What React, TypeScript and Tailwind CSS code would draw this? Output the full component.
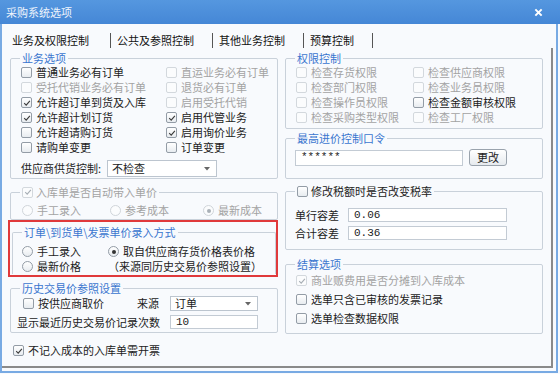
import { FC, ReactNode } from "react";

const cjk = "font-['Noto_Sans_CJK_SC','Noto_Sans',sans-serif]";

const Check: FC<{ checked?: boolean; disabled?: boolean }> = ({ checked, disabled }) => (
  <span
    className={`w-[11px] h-[11px] rounded-[2px] border flex items-center justify-center shrink-0 ${
      disabled ? "border-[#d3d8dd] bg-[#fbfcfd]" : "border-[#939ca6] bg-gradient-to-b from-[#ffffff] to-[#e8ecf0]"
    }`}
  >
    {checked && (
      <svg viewBox="0 0 10 10" className="w-[8px] h-[8px]">
        <path
          d="M1.5 5.2 L4 7.6 L8.6 2.4"
          fill="none"
          stroke={disabled ? "#a7aeb5" : "#3b3b3b"}
          strokeWidth="1.4"
        />
      </svg>
    )}
  </span>
);

const Radio: FC<{ checked?: boolean; disabled?: boolean }> = ({ checked, disabled }) => (
  <span
    className={`w-[11px] h-[11px] rounded-full border flex items-center justify-center shrink-0 ${
      disabled ? "border-[#d0d5da] bg-[#fbfcfd]" : "border-[#939ca6] bg-gradient-to-b from-[#ffffff] to-[#e8ecf0]"
    }`}
  >
    {checked && (
      <span className={`w-[4px] h-[4px] rounded-full ${disabled ? "bg-[#a9b0b7]" : "bg-[#333]"}`} />
    )}
  </span>
);

interface ItemProps {
  label: string;
  checked?: boolean;
  disabled?: boolean;
  radio?: boolean;
}

const Item: FC<ItemProps> = ({ label, checked, disabled, radio }) => (
  <div className="flex items-center gap-[4px] h-[15px]">
    {radio ? <Radio checked={checked} disabled={disabled} /> : <Check checked={checked} disabled={disabled} />}
    <span className={`leading-[15px] whitespace-nowrap ${disabled ? "text-[#a3a3a3]" : "text-[#222]"}`}>
      {label}
    </span>
  </div>
);

const Group: FC<{ legend: ReactNode; className?: string; children: ReactNode }> = ({
  legend,
  className,
  children,
}) => (
  <fieldset className={`border border-[#c9d1da] rounded-[2px] min-w-0 ${className ?? ""}`}>
    <legend className="ml-[9px] px-[2px] h-[14px] leading-[14px] text-[#3a76cf]">{legend}</legend>
    {children}
  </fieldset>
);

const Select: FC<{ value: string; className: string }> = ({ value, className }) => (
  <div className={`flex items-center justify-between bg-white border border-[#bcc5cf] pl-[4px] pr-[6px] ${className}`}>
    <span className="leading-none text-[#222]">{value}</span>
    <svg viewBox="0 0 6 4" className="w-[6px] h-[4px]">
      <path d="M0 0 H6 L3 3.5 Z" fill="#666" />
    </svg>
  </div>
);

const Input: FC<{ value: string; className: string }> = ({ value, className }) => (
  <div className={`flex items-center bg-white border border-[#c3cbd4] pl-[5px] ${className}`}>
    <span className="font-['Liberation_Mono',monospace] text-[11px] leading-none text-[#222]">{value}</span>
  </div>
);

const tabs = ["业务及权限控制", "公共及参照控制", "其他业务控制", "预算控制"];

export default function App() {
  return (
    <div className={`w-[560px] h-[374px] bg-[#f8fafd] flex flex-col text-[11px] ${cjk}`}>
      {/* title bar */}
      <div className="h-[24px] shrink-0 bg-gradient-to-b from-[#5597df] to-[#4587d6] flex items-center justify-between pl-[6px] pr-[17px]">
        <span className="text-[#eef4fc] text-[11px] leading-none">采购系统选项</span>
        <svg viewBox="0 0 10 10" className="w-[9px] h-[9px]">
          <path d="M1.5 1.5 L8.5 8.5 M8.5 1.5 L1.5 8.5" stroke="#ffffff" strokeWidth="2.2" />
        </svg>
      </div>

      {/* window frame */}
      <div className="flex-1 flex flex-col border-l-2 border-r-2 border-b-2 border-[#78aae3] mr-[2px] mb-[1px] pr-[3px] pb-[3px]">
        {/* tabs */}
        <div className="h-[24px] shrink-0 pt-[8px] pl-[10px] flex items-center">
          {tabs.map((t, i) => (
            <div key={t} className="flex items-center">
              <span className="leading-[15px] text-[#111]">{t}</span>
              <span className={`w-px h-[15px] bg-[#555] ${i === 0 ? "ml-[21px]" : "ml-[18px]"} mr-[6px]`} />
            </div>
          ))}
        </div>

        {/* page */}
        <div className="flex-1 flex gap-[7px] pl-[8px] pr-[6px] border-r-2 border-b-2 border-[#8a8a8a]">
          {/* left column */}
          <div className="w-[268px] flex flex-col">
            <Group legend="业务选项" className="mt-[3px]">
              <div className="grid grid-cols-[145px_1fr] pl-[10px]">
                <Item label="普通业务必有订单" />
                <Item label="直运业务必有订单" disabled />
                <Item label="受托代销业务必有订单" disabled />
                <Item label="退货必有订单" disabled />
                <Item label="允许超订单到货及入库" checked />
                <Item label="启用受托代销" disabled />
                <Item label="允许超计划订货" checked />
                <Item label="启用代管业务" checked />
                <Item label="允许超请购订货" />
                <Item label="启用询价业务" checked />
                <Item label="请购单变更" />
                <Item label="订单变更" />
              </div>
              <div className="flex items-center mt-[5px] mb-[1px] pl-[10px]">
                <span className="w-[86px] text-[#222] leading-none">供应商供货控制:</span>
                <Select value="不检查" className="w-[110px] h-[17px]" />
              </div>
            </Group>

            <Group
              className="mt-[6px]"
              legend={
                <span className="flex items-center gap-[3px] text-[#a3a3a3]">
                  <Check checked disabled />
                  入库单是否自动带入单价
                </span>
              }
            >
              <div className="flex pl-[11px] mt-[4px] mb-[1px]">
                <div className="w-[88px]">
                  <Item label="手工录入" radio disabled />
                </div>
                <div className="w-[93px]">
                  <Item label="参考成本" radio disabled />
                </div>
                <Item label="最新成本" radio checked disabled />
              </div>
            </Group>

            {/* highlighted region */}
            <div className="-ml-[2px] w-[270px] border-2 border-[#e0393b] pt-[3px] pb-[1px]">
              <fieldset className="ml-[2px] border border-b-0 border-[#c9d1da] rounded-t-[2px] min-w-0">
                <legend className="ml-[9px] px-[2px] h-[14px] leading-[14px] text-[#3a76cf]">
                  订单\到货单\发票单价录入方式
                </legend>
                <div className="grid grid-cols-[86px_1fr] pl-[9px] mt-[5px]">
                  <Item label="手工录入" radio />
                  <Item label="取自供应商存货价格表价格" radio checked />
                  <Item label="最新价格" radio />
                  <span className="leading-[15px] text-[#222] whitespace-nowrap">（来源同历史交易价参照设置）</span>
                </div>
              </fieldset>
            </div>

            <Group legend="历史交易价参照设置" className="mt-[4px]">
              <div className="flex items-center pl-[12px] mt-[1px]">
                <div className="w-[114px]">
                  <Item label="按供应商取价" />
                </div>
                <span className="w-[33px] leading-none text-[#222]">来源</span>
                <Select value="订单" className="w-[88px] h-[15px]" />
              </div>
              <div className="flex items-center pl-[6px] mt-[4px] mb-[3px]">
                <span className="w-[153px] leading-none text-[#222]">显示最近历史交易价记录次数</span>
                <Input value="10" className="w-[88px] h-[14px]" />
              </div>
            </Group>

            <div className="ml-[3px] mt-[10px]">
              <Item label="不记入成本的入库单需开票" checked />
            </div>
          </div>

          {/* right column */}
          <div className="w-[258px] flex flex-col">
            <Group legend="权限控制" className="mt-[3px]">
              <div className="grid grid-cols-[117px_1fr] pl-[10px] mb-[3px]">
                <Item label="检查存货权限" disabled />
                <Item label="检查供应商权限" disabled />
                <Item label="检查部门权限" disabled />
                <Item label="检查业务员权限" disabled />
                <Item label="检查操作员权限" disabled />
                <Item label="检查金额审核权限" />
                <Item label="检查采购类型权限" disabled />
                <Item label="检查工厂权限" disabled />
              </div>
            </Group>

            <Group legend="最高进价控制口令" className="mt-[2px]">
              <div className="flex items-center pl-[9px] mt-[4px] mb-[12px]">
                <Input value="******" className="w-[168px] h-[16px]" />
                <button className="ml-[6px] w-[38px] h-[17px] rounded-[3px] border border-[#9aa3ad] bg-gradient-to-b from-[#ffffff] to-[#e6eaee] text-[11px] leading-none text-[#222]">
                  更改
                </button>
              </div>
            </Group>

            <Group
              className="mt-[5px]"
              legend={
                <span className="flex items-center gap-[3px] text-[#222]">
                  <Check />
                  修改税额时是否改变税率
                </span>
              }
            >
              <div className="flex items-center pl-[9px] mt-[10px]">
                <span className="w-[53px] leading-none text-[#222]">单行容差</span>
                <Input value="0.06" className="w-[159px] h-[14px]" />
              </div>
              <div className="flex items-center pl-[9px] mt-[4px] mb-[9px]">
                <span className="w-[53px] leading-none text-[#222]">合计容差</span>
                <Input value="0.36" className="w-[159px] h-[14px]" />
              </div>
            </Group>

            <Group legend="结算选项" className="mt-[7px]">
              <div className="flex flex-col gap-[4px] pl-[10px] mt-[2px] mb-[7px]">
                <Item label="商业贩费用是否分摊到入库成本" checked disabled />
                <Item label="选单只含已审核的发票记录" />
                <Item label="选单检查数据权限" />
              </div>
            </Group>
          </div>
        </div>
      </div>
    </div>
  );
}
